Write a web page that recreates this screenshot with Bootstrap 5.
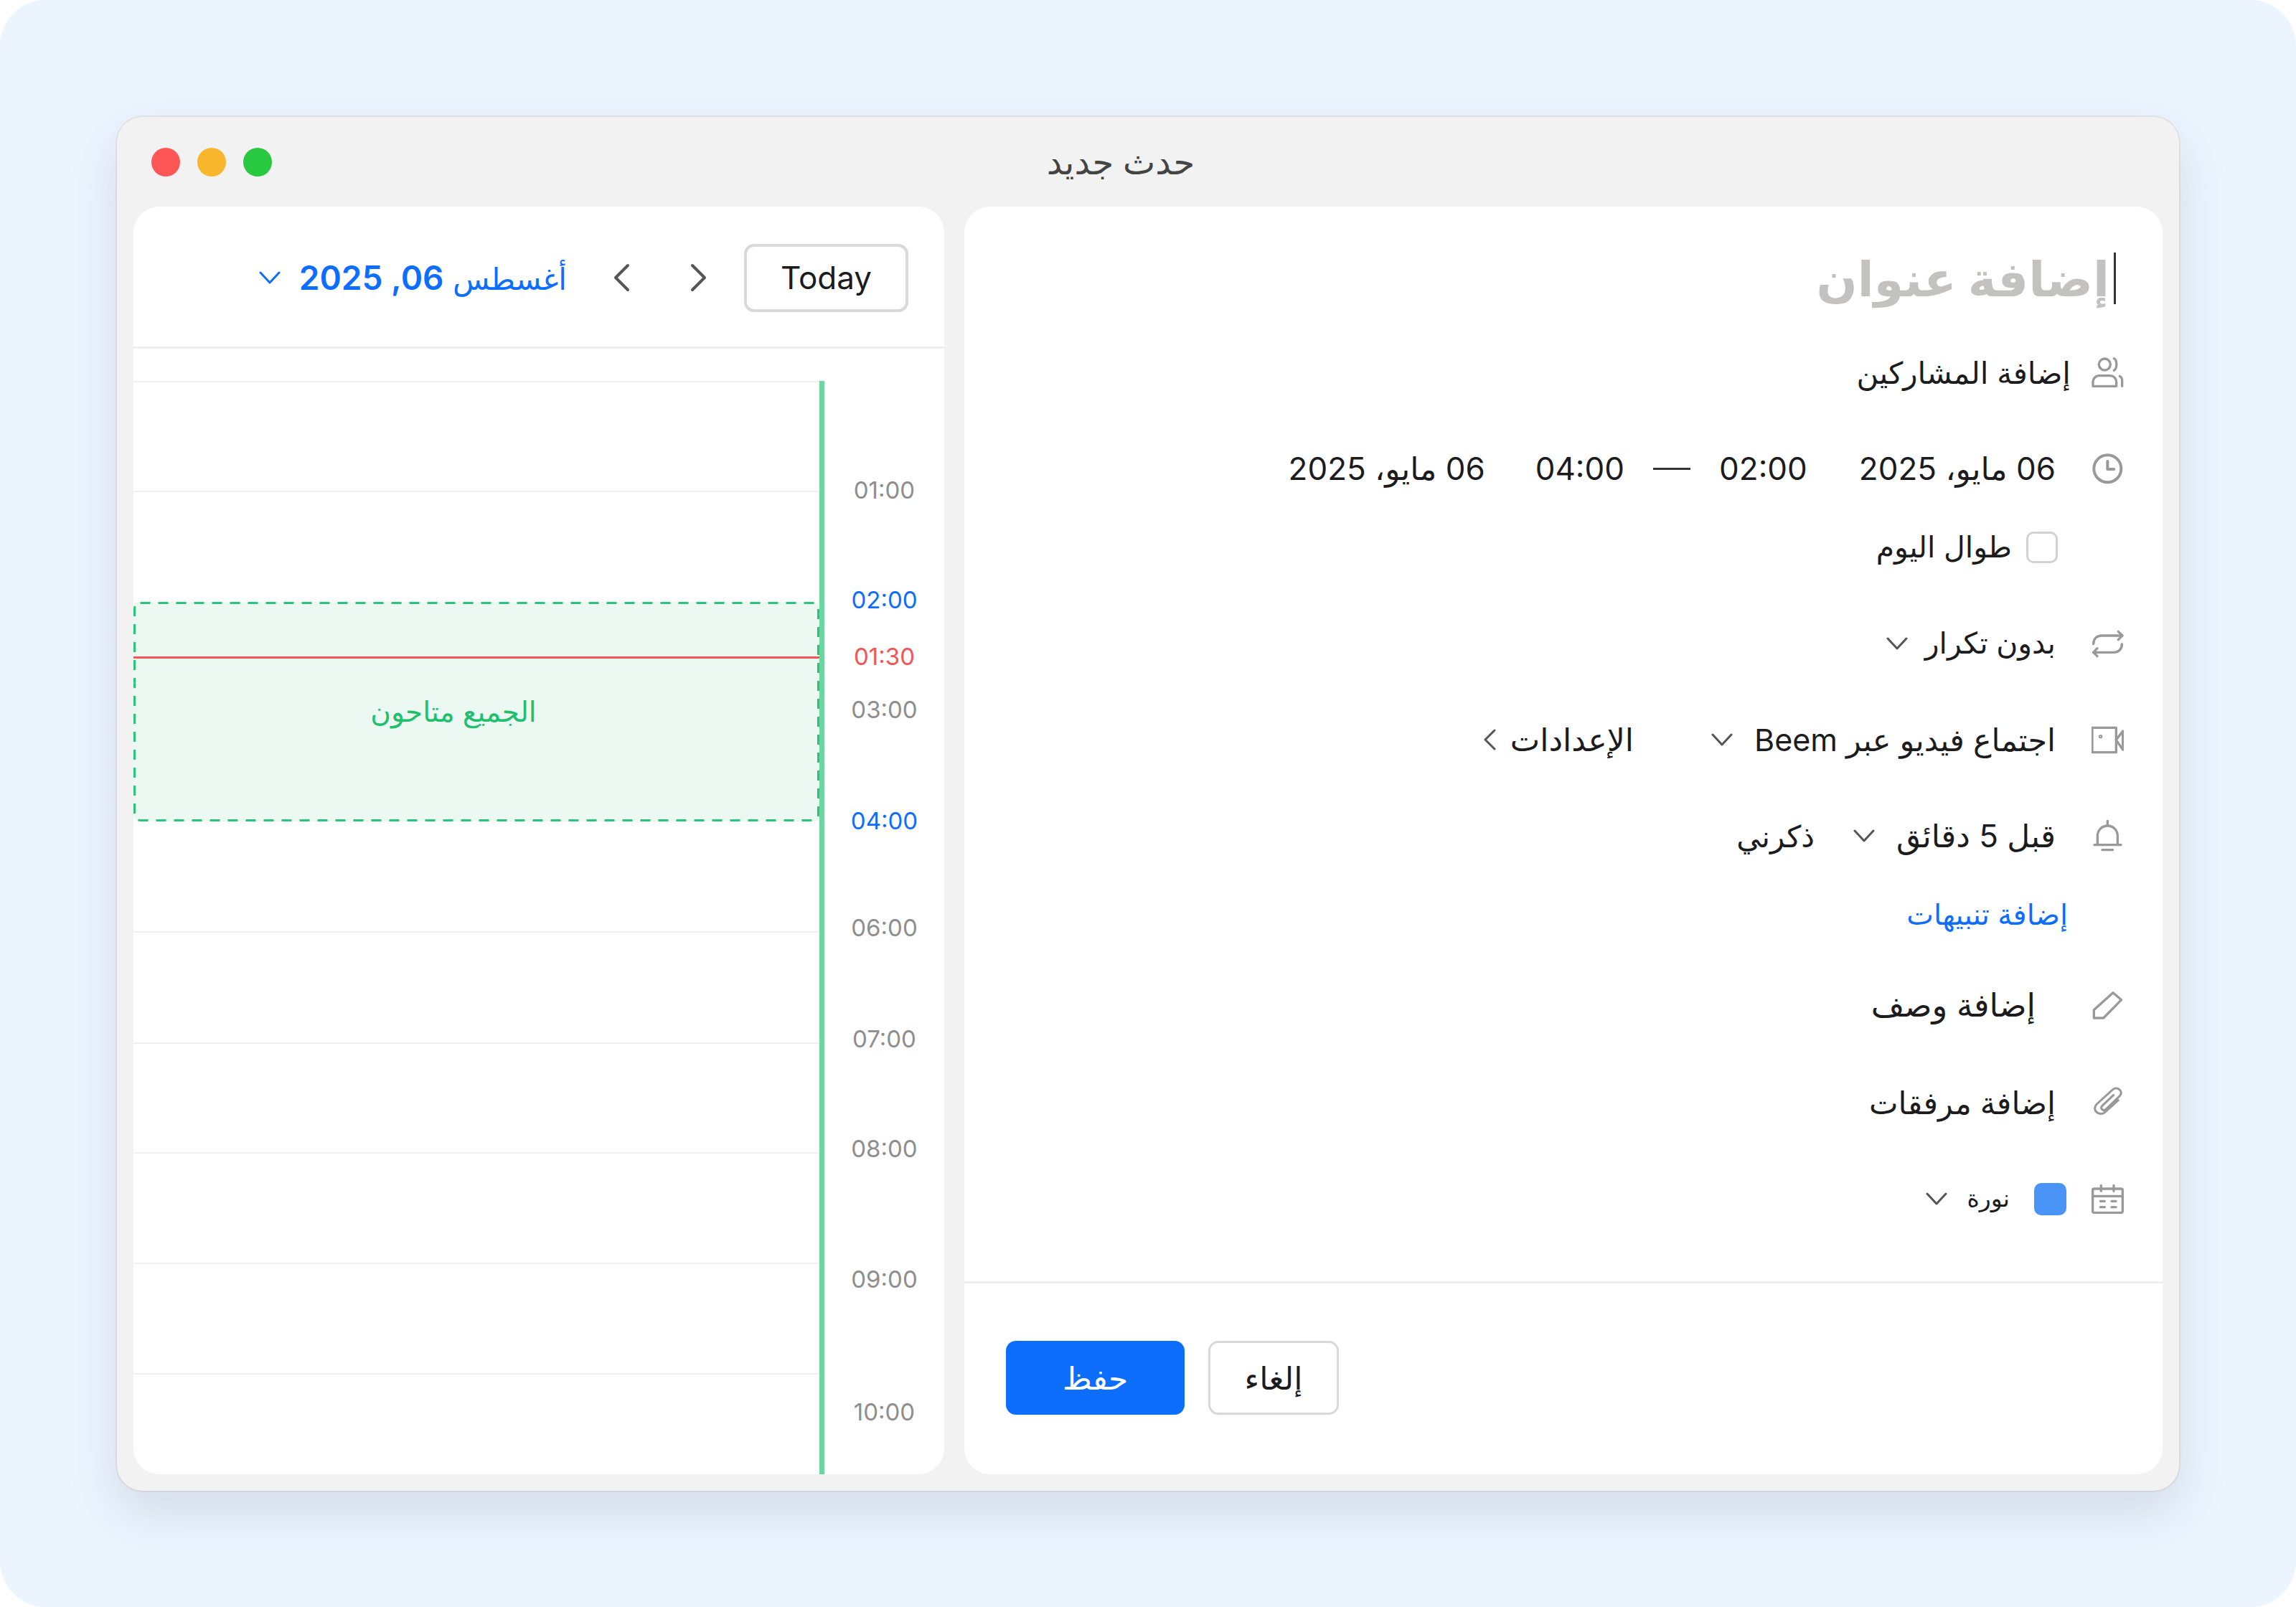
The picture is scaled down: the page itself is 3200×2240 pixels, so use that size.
<!DOCTYPE html>
<html lang="ar" dir="rtl">
<head>
    <meta charset="UTF-8">
    <title>حدث جديد</title>
    <link href="https://cdn.jsdelivr.net/npm/bootstrap@5.3.0/dist/css/bootstrap.min.css" rel="stylesheet">
    <style>
        body { background: #fff; font-family: Inter, "DejaVu Sans", sans-serif; color: #1c1c1e; font-size: 44px; }
        .stage { width: 3200px; height: 2240px; padding: 163px; background: #ecf4fe; border-radius: 64px; }
        .app-window { height: 1915px; background: #f2f2f2; border-radius: 36px; padding: 0 23px 23px; box-shadow: 0 30px 70px rgba(50, 70, 100, .14), 0 0 0 2px #e4e6e9; }
        .title-bar { height: 125px; }
        .light { width: 40px; height: 40px; border-radius: 50%; }
        .lights { padding-left: 25px; gap: 24px; }
        .win-title { padding-right: 269px; font-size: 48px; font-weight: 500; color: #444; }
        .panel { background: #fff; border-radius: 36px; overflow: hidden; height: 1767px; }
        .panel-form { width: 1670px; }
        .panel-cal { width: 1130px; margin-right: 28px; }

        /* form */
        .form-body { padding: 50px 54px 0 0; }
        .title-line { height: 100px; padding-right: 11px; margin-bottom: 51px; }
        .caret-bar { width: 3px; height: 72px; background: #333; margin-left: 6px; }
        .title-text { font-size: 67px; font-weight: 700; color: #c4c1c1; line-height: 1; }
        .form-row { height: 60px; margin-bottom: 74px; }
        .form-row.tight { margin-bottom: 50px; }
        .form-row.mid { margin-bottom: 66px; }
        .form-row.wide { margin-bottom: 76px; }
        .ic { width: 45px; height: 45px; flex: none; margin-left: 50px; }
        .ic-near { margin-left: 29px; }
        .ic-link { margin-left: 33px; }
        .ic-swatch { margin-left: 35px; }
        .ic-far { margin-left: 78px; }
        .ic-check { margin-left: 47px; }
        .ic-none { visibility: hidden; }
        .ic svg { display: block; width: 45px; height: 45px; fill: none; stroke: #999; stroke-width: 10; stroke-linejoin: round; stroke-linecap: round; }
        .chev { flex: none; width: 30px; height: 18px; fill: none; stroke: #555; stroke-width: 3; stroke-linecap: round; stroke-linejoin: round; }
        .chev-blue { stroke: #0d6efd; }
        .date-gap { margin-left: 72px; }
        .date-gap-end { margin-left: 70px; }
        .dash { width: 52px; height: 3px; background: #333; margin: 0 40px; }
        .check-box { width: 44px; height: 44px; border: 3px solid #d2d2d2; border-radius: 10px; margin-left: 20px; }
        .txt-41 { font-size: 41px; }
        .txt-42 { font-size: 42px; }
        .txt-43 { font-size: 43px; }
        .txt-45 { font-size: 45px; }
        .add-link { color: #0d6efd; font-size: 40px; text-decoration: none; }
        .cal-swatch { width: 45px; height: 45px; background: #4a94f8; border-radius: 10px; margin-left: 34px; }
        .cal-name { font-size: 33px; margin-left: 28px; }
        .sel-gap { margin-left: 24px; }
        .sel-gap-tight { margin-left: 20px; }
        .sel-gap-wide { margin-left: 30px; }
        .item-gap { margin-left: 54px; }
        .item-gap-wide { margin-left: 108px; }
        .back-chev { flex: none; width: 18px; height: 30px; fill: none; stroke: #555; stroke-width: 3; stroke-linecap: round; stroke-linejoin: round; }
        .form-foot { height: 269px; border-top: 3px solid #f0f0f0; padding: 80px 0 0 58px; gap: 33px; }
        .act-btn { height: 103px; border-radius: 14px; font-size: 44px; padding: 0; }
        .act-save { width: 249px; background: #0d6efd; color: #fff; border: 0; }
        .act-cancel { width: 182px; background: #fff; color: #1c1c1e; border: 3px solid #d9d9d9; }

        /* calendar */
        .cal-head { height: 198px; padding: 3px 50px 0 0; border-bottom: 3px solid #efefef; }
        .today-btn { width: 229px; height: 95px; border: 4px solid #d9d9d9; border-radius: 14px; background: #fff; font-size: 44px; color: #1c1c1e; padding: 0; margin-left: 52px; }
        .nav-chev { width: 23px; height: 40px; fill: none; stroke: #555; stroke-width: 4; stroke-linecap: round; stroke-linejoin: round; }
        .nav-chev-gap { margin-left: 84px; }
        .nav-chev-end { margin-left: 65px; }
        .month-lbl { color: #0d6efd; margin-left: 26px; }
        .month-ar { font-size: 42px; }
        .month-num { font-size: 46px; font-weight: 600; }
        .cal-body { padding-top: 45px; height: 1569px; }
        .time-col { width: 174px; padding-top: 132px; flex: none; font-size: 33px; color: #8e8e8e; border-left: 7px solid #6dd5a0; text-align: center; }
        .time-lbl { line-height: 40px; }
        .time-blue { color: #0d6efd; }
        .time-red { color: #f55555; }
        .grid-col { position: relative; flex: 1; }
        .grid-line { border-top: 2px solid #f0f0f0; }
        .avail-box { position: absolute; top: 308px; left: 0; right: 0; height: 306px; background: #ecf8f2; border-radius: 8px; color: #1fbf6e; font-size: 39px; padding-right: 64px; }
        .dash-frame { position: absolute; inset: 0; width: 100%; height: 100%; }
        .dash-frame rect { x: 1.5px; y: 1.5px; width: calc(100% - 3px); height: calc(100% - 3px); rx: 8px; fill: none; stroke: #2bc578; stroke-width: 3; stroke-dasharray: 14 11; }
        .now-line { position: absolute; top: 384px; left: 0; right: 0; height: 3px; background: #f55555; }
    </style>
</head>
<body class="m-0">
    <div class="stage">
        <div class="app-window d-flex flex-column">
            <!-- barre de titre -->
            <div class="title-bar d-flex align-items-center flex-shrink-0" dir="ltr">
                <div class="lights d-flex">
                    <span class="light" style="background:#ff5555"></span>
                    <span class="light" style="background:#f8b62d"></span>
                    <span class="light" style="background:#28c840"></span>
                </div>
                <div class="win-title flex-grow-1 text-center" dir="rtl">حدث جديد</div>
            </div>

            <div class="d-flex">
                <!-- formulaire -->
                <div class="panel panel-form d-flex flex-column">
                    <div class="form-body flex-grow-1">
                        <div class="title-line d-flex align-items-center">
                            <span class="caret-bar"></span>
                            <span class="title-text">إضافة عنوان</span>
                        </div>

                        <div class="form-row d-flex align-items-center">
                            <span class="ic ic-near"><svg viewBox="0 0 135 135"><circle cx="55" cy="33" r="24"/><path d="M6 124v-18a26 26 0 0 1 26-26h46a26 26 0 0 1 26 26v18z"/><path d="M94 8c14 6 14 42 0 50"/><path d="M128 124v-22a22 22 0 0 0-10-20"/></svg></span>
                            <span class="txt-42">إضافة المشاركين</span>
                        </div>

                        <div class="form-row tight d-flex align-items-center">
                            <span class="ic"><svg viewBox="0 0 135 135" style="stroke-width:12"><circle cx="67" cy="67" r="57"/><path d="M67 36v33h27"/></svg></span>
                            <span class="date-gap">06 مايو، 2025</span>
                            <span>02:00</span>
                            <span class="dash"></span>
                            <span class="date-gap-end">04:00</span>
                            <span>06 مايو، 2025</span>
                        </div>

                        <div class="form-row d-flex align-items-center">
                            <span class="ic ic-check ic-none"></span>
                            <span class="check-box"></span>
                            <span class="txt-41">طوال اليوم</span>
                        </div>

                        <div class="form-row d-flex align-items-center">
                            <span class="ic"><svg viewBox="0 0 135 135"><path d="M8 68c0-22 14-35 34-35h85"/><path d="M112 16l17 17-17 17"/><path d="M127 68c0 22-14 35-34 35H8"/><path d="M24 86L8 103l16 16"/></svg></span>
                            <span class="sel-gap txt-41">بدون تكرار</span>
                            <svg class="chev" viewBox="0 0 30 18"><path d="M2 2l13 14L28 2"/></svg>
                        </div>

                        <div class="form-row d-flex align-items-center">
                            <span class="ic"><svg viewBox="0 0 135 135"><path d="M3 16h100v103H3z"/><path d="M103 67l28-37v78z"/><circle cx="38" cy="53" r="3"/></svg></span>
                            <span class="sel-gap-wide txt-43">اجتماع فيديو عبر Beem</span>
                            <svg class="chev item-gap-wide" viewBox="0 0 30 18"><path d="M2 2l13 14L28 2"/></svg>
                            <span class="sel-gap-tight">الإعدادات</span>
                            <svg class="back-chev" viewBox="0 0 18 30"><path d="M16 2L3 15l13 13"/></svg>
                        </div>

                        <div class="form-row tight d-flex align-items-center">
                            <span class="ic"><svg viewBox="0 0 135 135"><path d="M67 4v14"/><path d="M25 100V66a42 42 0 0 1 84 0v34"/><path d="M12 104h111"/><path d="M45 125h44"/></svg></span>
                            <span class="sel-gap-wide">قبل 5 دقائق</span>
                            <svg class="chev item-gap" viewBox="0 0 30 18"><path d="M2 2l13 14L28 2"/></svg>
                            <span class="txt-42">ذكرني</span>
                        </div>

                        <div class="form-row mid d-flex align-items-center">
                            <span class="ic ic-link ic-none"></span>
                            <a class="add-link" href="#">إضافة تنبيهات</a>
                        </div>

                        <div class="form-row wide d-flex align-items-center">
                            <span class="ic ic-far"><svg viewBox="0 0 135 135"><path d="M10 86L90 14l35 30-75 76H10z"/></svg></span>
                            <span class="txt-45">إضافة وصف</span>
                        </div>

                        <div class="form-row d-flex align-items-center">
                            <span class="ic"><svg viewBox="0 0 135 135" style="stroke-width:9"><path d="M92 34L44 80c-10 10 6 24 16 14l58-56c18-18-10-44-30-26L22 72c-24 24 10 54 34 34l56-50"/></svg></span>
                            <span class="txt-43">إضافة مرفقات</span>
                        </div>

                        <div class="form-row d-flex align-items-center mb-0">
                            <span class="ic ic-swatch"><svg viewBox="0 0 135 135"><rect x="5" y="24" width="125" height="100" rx="6"/><path d="M5 55h125M40 10v24M93 10v24M37 76h18M84 76h18M37 101h18M84 101h18"/></svg></span>
                            <span class="cal-swatch"></span>
                            <span class="cal-name">نورة</span>
                            <svg class="chev" viewBox="0 0 30 18"><path d="M2 2l13 14L28 2"/></svg>
                        </div>
                    </div>

                    <div class="form-foot d-flex justify-content-end flex-shrink-0">
                        <button class="btn act-btn act-cancel">إلغاء</button>
                        <button class="btn act-btn act-save">حفظ</button>
                    </div>
                </div>

                <!-- calendrier -->
                <div class="panel panel-cal d-flex flex-column">
                    <div class="cal-head d-flex align-items-center flex-shrink-0">
                        <button class="btn today-btn">Today</button>
                        <svg class="nav-chev nav-chev-gap" viewBox="0 0 23 40"><path d="M3 3l17 17L3 37"/></svg>
                        <svg class="nav-chev nav-chev-end" viewBox="0 0 23 40"><path d="M20 3L3 20l17 17"/></svg>
                        <span class="month-lbl"><span class="month-ar">أغسطس</span> <span class="month-num">06, 2025</span></span>
                        <svg class="chev chev-blue" viewBox="0 0 30 18"><path d="M2 2l13 14L28 2"/></svg>
                    </div>

                    <div class="cal-body d-flex">
                        <div class="time-col">
                            <div class="time-lbl" style="height:153px">01:00</div>
                            <div class="time-lbl time-blue" style="height:79px">02:00</div>
                            <div class="time-lbl time-red" style="height:74px">01:30</div>
                            <div class="time-lbl" style="height:155px">03:00</div>
                            <div class="time-lbl time-blue" style="height:149px">04:00</div>
                            <div class="time-lbl" style="height:155px">06:00</div>
                            <div class="time-lbl" style="height:153px">07:00</div>
                            <div class="time-lbl" style="height:182px">08:00</div>
                            <div class="time-lbl" style="height:185px">09:00</div>
                            <div class="time-lbl" style="height:60px">10:00</div>
                        </div>
                        <div class="grid-col">
                            <div class="grid-line" style="height:153px"></div>
                            <div class="grid-line" style="height:614px"></div>
                            <div class="grid-line" style="height:155px"></div>
                            <div class="grid-line" style="height:153px"></div>
                            <div class="grid-line" style="height:154px"></div>
                            <div class="grid-line" style="height:154px"></div>
                            <div class="grid-line" style="height:141px"></div>
                            <div class="avail-box d-flex align-items-center justify-content-center">
                                <svg class="dash-frame"><rect/></svg>
                                الجميع متاحون
                            </div>
                            <div class="now-line"></div>
                        </div>
                    </div>
                </div>
            </div>
        </div>
    </div>

    <script src="https://cdn.jsdelivr.net/npm/bootstrap@5.3.0/dist/js/bootstrap.bundle.min.js"></script>
</body>
</html>
